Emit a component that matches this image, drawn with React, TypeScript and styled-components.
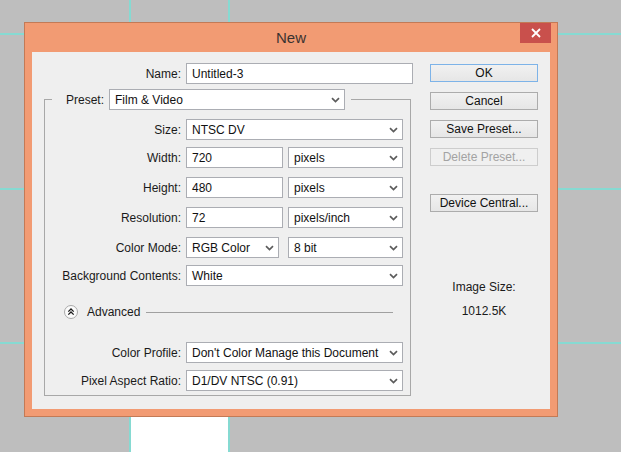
import styled, { createGlobalStyle } from 'styled-components';

const GlobalStyle = createGlobalStyle`
  html, body {
    margin: 0;
    padding: 0;
  }
  body {
    background: #bebebe;
    font-family: 'Liberation Sans', Arial, sans-serif;
    font-size: 12px;
    color: #1a1a1a;
  }
`;

const Desktop = styled.div`
  position: relative;
  width: 621px;
  height: 452px;
  overflow: hidden;
  background: #bebebe;
`;

const Guide = styled.div<{ $x?: number; $y?: number }>`
  position: absolute;
  background: #86dad2;
  ${(p) =>
    p.$x !== undefined
      ? `left: ${p.$x}px; top: 0; bottom: 0; width: 2px;`
      : `top: ${p.$y}px; left: 0; right: 0; height: 2px;`}
`;

const DocCanvas = styled.div`
  position: absolute;
  left: 131px;
  width: 97px;
  top: 300px;
  bottom: 0;
  background: #ffffff;
`;

const Window = styled.div`
  position: absolute;
  left: 24px;
  top: 22px;
  width: 534px;
  height: 395px;
  box-sizing: border-box;
  border: 1px solid #c37a56;
  background: #f29b73;
  display: flex;
  flex-direction: column;
`;

const TitleBar = styled.div`
  position: relative;
  height: 29px;
  flex-shrink: 0;
  display: flex;
  align-items: center;
  justify-content: center;
  font-size: 15px;
  color: #3a3330;
`;

const CloseButton = styled.div`
  position: absolute;
  top: 0;
  right: 6px;
  width: 31px;
  height: 20px;
  background: #c9504c;
  display: flex;
  align-items: center;
  justify-content: center;
`;

const Panel = styled.div`
  flex: 1;
  margin: 0 7px 7px 7px;
  background: #efefef;
  display: flex;
  align-items: flex-start;
  padding-top: 11px;
`;

const FormCol = styled.div`
  width: 381px;
  display: flex;
  flex-direction: column;
`;

const Row = styled.div<{ $mt?: number }>`
  display: flex;
  align-items: center;
  margin-top: ${(p) => p.$mt ?? 0}px;
`;

const Label = styled.span<{ $w?: number }>`
  width: ${(p) => (p.$w ? `${p.$w}px` : 'auto')};
  flex-shrink: 0;
  text-align: right;
  margin-right: 5px;
  white-space: nowrap;
`;

const Field = styled.div<{ $w: number; $ml?: number }>`
  box-sizing: border-box;
  width: ${(p) => p.$w}px;
  height: 21px;
  margin-left: ${(p) => p.$ml ?? 0}px;
  border: 1px solid #abadb3;
  background: #ffffff;
  display: flex;
  align-items: center;
  justify-content: space-between;
  padding: 0 4px 0 5px;
  color: #111;
  white-space: nowrap;
  overflow: hidden;
`;

const GroupBox = styled.fieldset`
  margin: 5px 0 0 12px;
  width: 367px;
  box-sizing: border-box;
  border: 1px solid #a8a8a8;
  padding: 0 0 4px 0;
  min-width: 0;
`;

const GroupLegend = styled.legend`
  margin-left: 7px;
  padding: 0 6px 0 14px;
`;

const AdvancedRow = styled.div`
  display: flex;
  align-items: center;
  height: 14px;
  margin: 19px 17px 0 19px;
`;

const AdvancedText = styled.span`
  margin: 0 6px 0 9px;
`;

const Rule = styled.div`
  flex: 1;
  height: 1px;
  background: #a0a0a0;
`;

const ButtonCol = styled.div`
  margin-left: 17px;
  width: 108px;
  padding-top: 1px;
  display: flex;
  flex-direction: column;
`;

const DialogButton = styled.div<{ $primary?: boolean; $disabled?: boolean; $mt?: number }>`
  box-sizing: border-box;
  height: 18px;
  margin-top: ${(p) => p.$mt ?? 0}px;
  border: 1px solid ${(p) => (p.$primary ? '#7db3e8' : p.$disabled ? '#cdcdcd' : '#acacac')};
  background: ${(p) =>
    p.$disabled ? '#f0f0f0' : 'linear-gradient(#f1f1f1, #e6e6e6)'};
  color: ${(p) => (p.$disabled ? '#a3a3a3' : '#111')};
  display: flex;
  align-items: center;
  justify-content: center;
  white-space: nowrap;
`;

const SizeInfo = styled.div<{ $mt: number }>`
  margin-top: ${(p) => p.$mt}px;
  line-height: 14px;
  text-align: center;
`;

const Chevron = () => (
  <svg width="9" height="6" viewBox="0 0 9 6">
    <path d="M1 1.2 L4.5 4.6 L8 1.2" fill="none" stroke="#5c5c5c" strokeWidth="1.7" />
  </svg>
);

const Select = ({ w, value, ml }: { w: number; value: string; ml?: number }) => (
  <Field $w={w} $ml={ml}>
    <span>{value}</span>
    <Chevron />
  </Field>
);

const CollapseIcon = () => (
  <svg width="14" height="14" viewBox="0 0 14 14">
    <circle cx="7" cy="7" r="6.5" fill="#fbfbfb" stroke="#a9a9a9" />
    <path d="M4.3 6.6 L7 4 L9.7 6.6 M4.3 9.6 L7 7 L9.7 9.6" fill="none" stroke="#1c1c1c" strokeWidth="1.3" />
  </svg>
);

const App = () => {
  return (
    <Desktop>
      <GlobalStyle />
      <Guide $y={33} />
      <Guide $y={188} />
      <Guide $y={342} />
      <Guide $x={129} />
      <Guide $x={228} />
      <DocCanvas />
      <Window>
        <TitleBar>
          New
          <CloseButton>
            <svg width="10" height="10" viewBox="0 0 10 10">
              <path d="M1 1 L9 9 M9 1 L1 9" stroke="#ffffff" strokeWidth="1.8" />
            </svg>
          </CloseButton>
        </TitleBar>
        <Panel>
          <FormCol>
            <Row>
              <Label $w={149}>Name:</Label>
              <Field $w={227}>Untitled-3</Field>
            </Row>
            <GroupBox>
              <GroupLegend>
                <Row>
                  <Label>Preset:</Label>
                  <Select w={236} value="Film & Video" />
                </Row>
              </GroupLegend>
              <Row $mt={9}>
                <Label $w={136}>Size:</Label>
                <Select w={217} value="NTSC DV" />
              </Row>
              <Row $mt={7}>
                <Label $w={136}>Width:</Label>
                <Field $w={97}>720</Field>
                <Select w={115} ml={5} value="pixels" />
              </Row>
              <Row $mt={9}>
                <Label $w={136}>Height:</Label>
                <Field $w={97}>480</Field>
                <Select w={115} ml={5} value="pixels" />
              </Row>
              <Row $mt={9}>
                <Label $w={136}>Resolution:</Label>
                <Field $w={97}>72</Field>
                <Select w={115} ml={5} value="pixels/inch" />
              </Row>
              <Row $mt={9}>
                <Label $w={136}>Color Mode:</Label>
                <Select w={93} value="RGB Color" />
                <Select w={115} ml={9} value="8 bit" />
              </Row>
              <Row $mt={7}>
                <Label $w={136}>Background Contents:</Label>
                <Select w={217} value="White" />
              </Row>
              <AdvancedRow>
                <CollapseIcon />
                <AdvancedText>Advanced</AdvancedText>
                <Rule />
              </AdvancedRow>
              <Row $mt={23}>
                <Label $w={136}>Color Profile:</Label>
                <Select w={217} value="Don't Color Manage this Document" />
              </Row>
              <Row $mt={7}>
                <Label $w={136}>Pixel Aspect Ratio:</Label>
                <Select w={217} value="D1/DV NTSC (0.91)" />
              </Row>
            </GroupBox>
          </FormCol>
          <ButtonCol>
            <DialogButton $primary>OK</DialogButton>
            <DialogButton $mt={10}>Cancel</DialogButton>
            <DialogButton $mt={10}>Save Preset...</DialogButton>
            <DialogButton $mt={10} $disabled>
              Delete Preset...
            </DialogButton>
            <DialogButton $mt={28}>Device Central...</DialogButton>
            <SizeInfo $mt={68}>Image Size:</SizeInfo>
            <SizeInfo $mt={10}>1012.5K</SizeInfo>
          </ButtonCol>
        </Panel>
      </Window>
    </Desktop>
  );
};

export default App;
